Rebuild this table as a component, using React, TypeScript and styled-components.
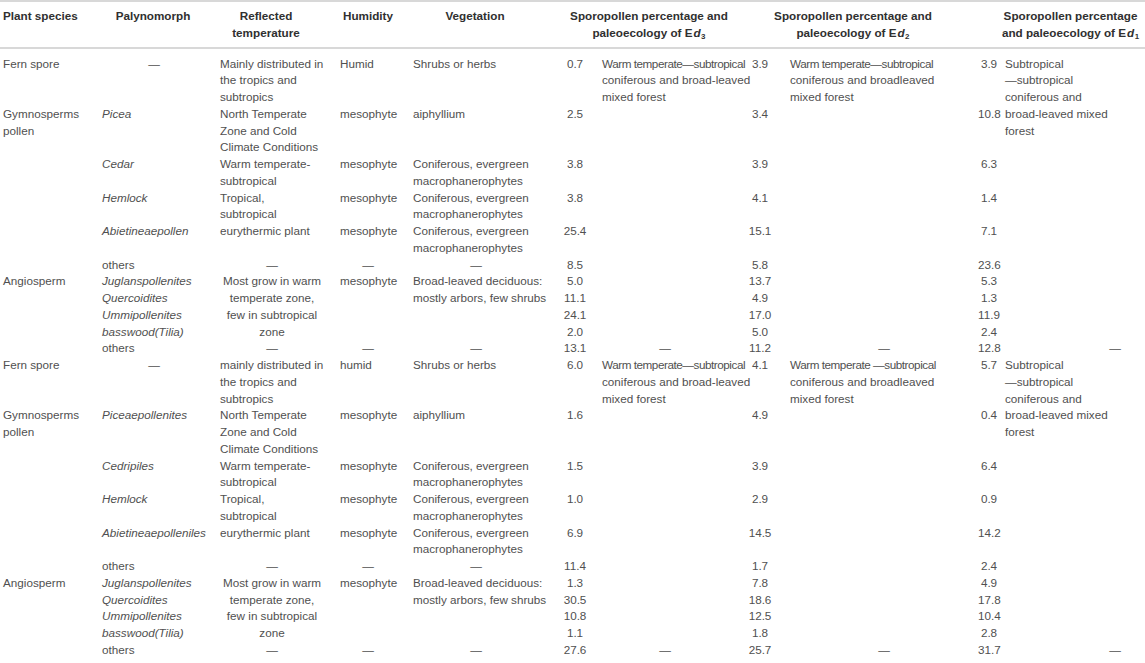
import React from "react";
import styled, { createGlobalStyle } from "styled-components";

const GlobalStyle = createGlobalStyle`
  body {
    margin: 0;
    background: #ffffff;
    font-family: "Liberation Sans", Arial, Helvetica, sans-serif;
  }
`;

// column widths and paddings, left to right
const COLS = [
  { w: 98, pad: "0 0 0 3px" },
  { w: 110, pad: "0 2px 0 4px" },
  { w: 128, pad: "0 12px" },
  { w: 64, pad: "0 4px" },
  { w: 150, pad: "0 11px 0 13px" },
  { w: 50, pad: "0" },
  { w: 148, pad: "0 20px 0 2px" },
  { w: 24, pad: "0" },
  { w: 206, pad: "0 0 0 18px" },
  { w: 22, pad: "0" },
  { w: 145, pad: "0 4px 0 5px" },
];
const NUM_COLS = [5, 7, 9];

type Align = "left" | "center" | "right";
type Cell = {
  t: React.ReactNode;
  c: number;
  rs?: number;
  align?: Align;
  i?: boolean;
  pad?: string;
};

interface Block {
  fernTemp: string;
  fernHum: string;
  names: string[];
  eco: [React.ReactNode, React.ReactNode, React.ReactNode];
  nums: [string, string, string][];
}

const DASH = "—";
const CONIFEROUS = "Coniferous, evergreen\nmacrophanerophytes";

// the "warm temperate—subtropical" lines are set tighter in the source
const Tight = styled.span`
  letter-spacing: -0.45px;
`;

const buildRows = (b: Block): Cell[][] => {
  const withNums = (k: number, cells: Cell[]): Cell[] => {
    const [a, c, d] = b.nums[k];
    return [...cells, { t: a, c: 5 }, { t: c, c: 7 }, { t: d, c: 9 }];
  };
  const last = b.nums[10];
  return [
    [
      { t: "Fern spore", c: 0 },
      { t: DASH, c: 1, align: "center" },
      { t: b.fernTemp, c: 2 },
      { t: b.fernHum, c: 3 },
      { t: "Shrubs or herbs", c: 4 },
      { t: b.nums[0][0], c: 5 },
      { t: b.eco[0], c: 6, rs: 10 },
      { t: b.nums[0][1], c: 7 },
      { t: b.eco[1], c: 8, rs: 10 },
      { t: b.nums[0][2], c: 9 },
      { t: b.eco[2], c: 10, rs: 10 },
    ],
    withNums(1, [
      { t: "Gymnosperms\npollen", c: 0, rs: 5 },
      { t: b.names[0], c: 1, i: true },
      { t: "North Temperate\nZone and Cold\nClimate Conditions", c: 2 },
      { t: "mesophyte", c: 3 },
      { t: "aiphyllium", c: 4 },
    ]),
    withNums(2, [
      { t: b.names[1], c: 1, i: true },
      { t: "Warm temperate-\nsubtropical", c: 2 },
      { t: "mesophyte", c: 3 },
      { t: CONIFEROUS, c: 4 },
    ]),
    withNums(3, [
      { t: b.names[2], c: 1, i: true },
      { t: "Tropical,\nsubtropical", c: 2 },
      { t: "mesophyte", c: 3 },
      { t: CONIFEROUS, c: 4 },
    ]),
    withNums(4, [
      { t: b.names[3], c: 1, i: true },
      { t: "eurythermic plant", c: 2 },
      { t: "mesophyte", c: 3 },
      { t: CONIFEROUS, c: 4 },
    ]),
    withNums(5, [
      { t: "others", c: 1 },
      { t: DASH, c: 2, align: "center" },
      { t: DASH, c: 3, align: "center" },
      { t: DASH, c: 4, align: "center" },
    ]),
    withNums(6, [
      { t: "Angiosperm", c: 0, rs: 5 },
      { t: "Juglanspollenites", c: 1, i: true },
      {
        t: "Most grow in warm\ntemperate zone,\nfew in subtropical\nzone",
        c: 2,
        rs: 4,
        align: "center",
      },
      { t: "mesophyte", c: 3, rs: 4 },
      { t: "Broad-leaved deciduous:\nmostly arbors, few shrubs", c: 4, rs: 4 },
    ]),
    withNums(7, [{ t: "Quercoidites", c: 1, i: true }]),
    withNums(8, [{ t: "Ummipollenites", c: 1, i: true }]),
    withNums(9, [{ t: "basswood(Tilia)", c: 1, i: true }]),
    [
      { t: "others", c: 1 },
      { t: DASH, c: 2, align: "center" },
      { t: DASH, c: 3, align: "center" },
      { t: DASH, c: 4, align: "center" },
      { t: last[0], c: 5 },
      { t: DASH, c: 6, align: "center" },
      { t: last[1], c: 7 },
      { t: DASH, c: 8, align: "center" },
      { t: last[2], c: 9 },
      { t: DASH, c: 10, align: "right", pad: "0 24px 0 0" },
    ],
  ];
};

const ecoText = (first: string, rest: string) => (
  <>
    <Tight>{first}</Tight>
    {"\n" + rest}
  </>
);

const ED1_TEXT = "Subtropical\n—subtropical\nconiferous and\nbroad-leaved mixed\nforest";

const blocks: Block[] = [
  {
    fernTemp: "Mainly distributed in\nthe tropics and\nsubtropics",
    fernHum: "Humid",
    names: ["Picea", "Cedar", "Hemlock", "Abietineaepollen"],
    eco: [
      ecoText("Warm temperate—subtropical", "coniferous and broad-leaved\nmixed forest"),
      ecoText("Warm temperate—subtropical", "coniferous and broadleaved\nmixed forest"),
      ED1_TEXT,
    ],
    nums: [
      ["0.7", "3.9", "3.9"],
      ["2.5", "3.4", "10.8"],
      ["3.8", "3.9", "6.3"],
      ["3.8", "4.1", "1.4"],
      ["25.4", "15.1", "7.1"],
      ["8.5", "5.8", "23.6"],
      ["5.0", "13.7", "5.3"],
      ["11.1", "4.9", "1.3"],
      ["24.1", "17.0", "11.9"],
      ["2.0", "5.0", "2.4"],
      ["13.1", "11.2", "12.8"],
    ],
  },
  {
    fernTemp: "mainly distributed in\nthe tropics and\nsubtropics",
    fernHum: "humid",
    names: ["Piceaepollenites", "Cedripiles", "Hemlock", "Abietineaepolleniles"],
    eco: [
      ecoText("Warm temperate—subtropical", "coniferous and broad-leaved\nmixed forest"),
      ecoText("Warm temperate —subtropical", "coniferous and broadleaved\nmixed forest"),
      ED1_TEXT,
    ],
    nums: [
      ["6.0", "4.1", "5.7"],
      ["1.6", "4.9", "0.4"],
      ["1.5", "3.9", "6.4"],
      ["1.0", "2.9", "0.9"],
      ["6.9", "14.5", "14.2"],
      ["11.4", "1.7", "2.4"],
      ["1.3", "7.8", "4.9"],
      ["30.5", "18.6", "17.8"],
      ["10.8", "12.5", "10.4"],
      ["1.1", "1.8", "2.8"],
      ["27.6", "25.7", "31.7"],
    ],
  },
];

const Page = styled.div`
  width: 1145px;
  background: #ffffff;
`;

const Table = styled.table`
  width: 1145px;
  table-layout: fixed;
  border-collapse: collapse;
  font-size: 11.7px;
  line-height: 16.75px;
  color: #505050;
  border-top: 2px solid #d8d8d8;
  border-bottom: 2px solid #d8d8d8;
`;

const Col = styled.col<{ $w: number }>`
  width: ${(p) => p.$w}px;
`;

const HeadRow = styled.tr`
  border-bottom: 2px solid #d8d8d8;
`;

const HeadCell = styled.th<{ $align?: Align; $pad?: string }>`
  padding: ${(p) => p.$pad ?? "6px 4px 5px"};
  text-align: ${(p) => p.$align ?? "center"};
  vertical-align: top;
  font-weight: 700;
  color: #303030;
  white-space: pre;
`;

const Ital = styled.i`
  font-style: italic;
  margin: 0 0.5px 0 1px;
`;

const Sub = styled.sub`
  font-size: 0.68em;
  line-height: 0;
  vertical-align: -0.25em;
`;

const BodyRow = styled.tr<{ $edge?: "first" | "last" }>`
  & > td {
    padding-top: ${(p) => (p.$edge === "first" ? "7px" : "0")};
    padding-bottom: ${(p) => (p.$edge === "last" ? "4px" : "0")};
  }
`;

const BodyCell = styled.td<{ $pad: string; $align: Align; $italic?: boolean }>`
  padding: ${(p) => p.$pad};
  text-align: ${(p) => p.$align};
  font-style: ${(p) => (p.$italic ? "italic" : "normal")};
  vertical-align: top;
  white-space: pre;
`;

const Ed = ({ n }: { n: number }) => (
  <>
    E<Ital>d</Ital>
    <Sub>{n}</Sub>
  </>
);

export default function App() {
  const rows = blocks.flatMap(buildRows);
  return (
    <Page>
      <GlobalStyle />
      <Table>
        <colgroup>
          {COLS.map((c, i) => (
            <Col key={i} $w={c.w} />
          ))}
        </colgroup>
        <thead>
          <HeadRow>
            <HeadCell $align="left" $pad="6px 4px 5px 3px">
              Plant species
            </HeadCell>
            <HeadCell>Palynomorph</HeadCell>
            <HeadCell $pad="6px 16px 5px 4px">{"Reflected\ntemperature"}</HeadCell>
            <HeadCell>Humidity</HeadCell>
            <HeadCell>Vegetation</HeadCell>
            <HeadCell colSpan={2}>
              {"Sporopollen percentage and\npaleoecology of "}
              <Ed n={3} />
            </HeadCell>
            <HeadCell colSpan={2} $pad="6px 24px 5px 4px">
              {"Sporopollen percentage and\npaleoecology of "}
              <Ed n={2} />
            </HeadCell>
            <HeadCell colSpan={2} $pad="6px 0 5px 18px">
              {"Sporopollen percentage\nand paleoecology of "}
              <Ed n={1} />
            </HeadCell>
          </HeadRow>
        </thead>
        <tbody>
          {rows.map((row, r) => (
            <BodyRow
              key={r}
              $edge={r === 0 ? "first" : r === rows.length - 1 ? "last" : undefined}
            >
              {row.map((cell) => (
                <BodyCell
                  key={cell.c}
                  rowSpan={cell.rs}
                  $pad={cell.pad ?? COLS[cell.c].pad}
                  $align={cell.align ?? (NUM_COLS.includes(cell.c) ? "center" : "left")}
                  $italic={cell.i}
                >
                  {cell.t}
                </BodyCell>
              ))}
            </BodyRow>
          ))}
        </tbody>
      </Table>
    </Page>
  );
}
